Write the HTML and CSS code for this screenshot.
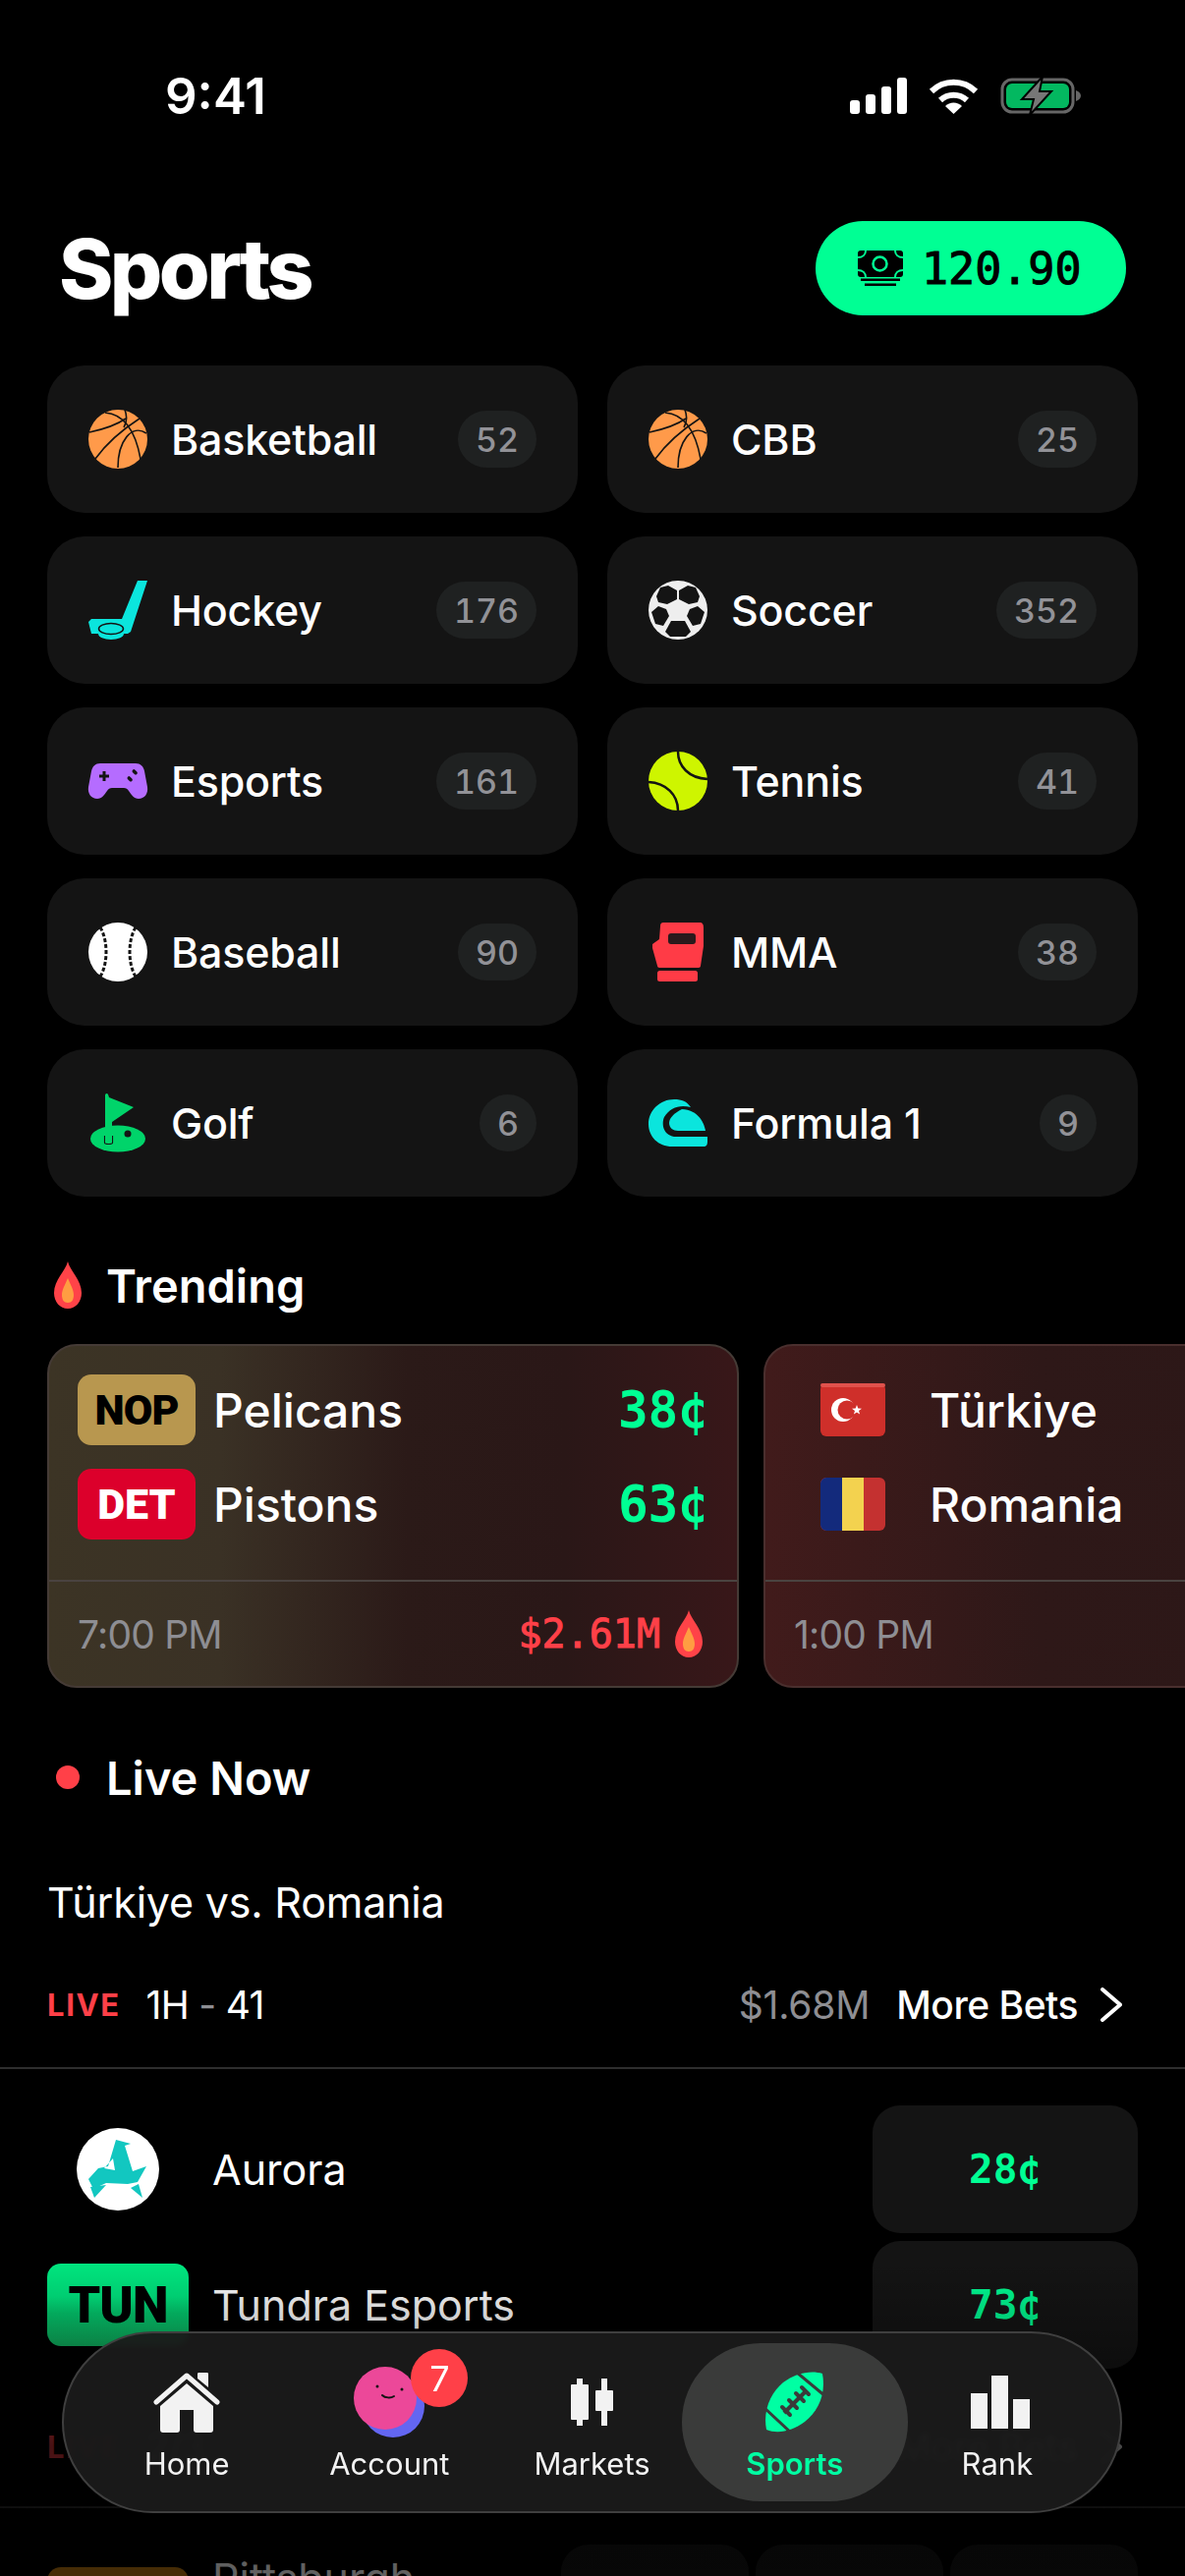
FILE: index.html
```html
<!DOCTYPE html>
<html lang="en">
<head>
  <meta charset="UTF-8">
  <meta name="viewport" content="width=device-width, initial-scale=1.0">
  <title>Sports</title>
  <link rel="stylesheet" href="styles.css">
</head>
<body>

  <!-- Shared icons -->
  <svg class="icon-defs" xmlns="http://www.w3.org/2000/svg">
    <symbol id="basketball" viewBox="0 0 60 60">
      <circle cx="30" cy="30" r="30" fill="#ff9a4a"/>
      <g fill="none" stroke="#141414" stroke-width="1.6">
        <path d="M1 23C15 20 28 16 38 9"/>
        <path d="M7 50C20 32 35 20 52 9"/>
        <path d="M17 3C30 4 46 12 53 50"/>
        <path d="M59 24C44 14 30 32 30 59"/>
        <path d="M37 0C40 8 39 13 36 18"/>
      </g>
    </symbol>
    <symbol id="flame" viewBox="0 0 28 48">
      <path d="M14 0C16 9 28 19 28 32C28 41 22 48 14 48C6 48 0 41 0 32C0 19 12 9 14 0Z" fill="#ff4348"/>
      <path d="M14 17C17 24 20 29 20 34C20 39 18 42 14 42C10 42 8 39 8 34C8 29 11 24 14 17Z" fill="#ff9d42"/>
    </symbol>
    <symbol id="chevron" viewBox="0 0 23 35">
      <path d="M3 2L21 17.500L3 33" fill="none" stroke="#fff" stroke-width="4" stroke-linecap="round" stroke-linejoin="round"/>
    </symbol>
  </svg>

  <div class="phone">

    <!-- Status bar -->
    <div class="status-bar">
      <span class="time">9:41</span>
      <div class="status-icons">
        <svg width="58" height="37" viewBox="0 0 58 37" fill="#fff">
          <rect x="0" y="23" width="10" height="14" rx="3"/>
          <rect x="16" y="17" width="10" height="20" rx="3"/>
          <rect x="32" y="9" width="10" height="28" rx="3"/>
          <rect x="48" y="0" width="10" height="37" rx="3"/>
        </svg>
        <svg width="51" height="37" viewBox="0 0 51 37">
          <g fill="none" stroke="#fff" stroke-width="6">
            <path d="M3 14A32 32 0 0 1 48 14"/>
            <path d="M12 23A20 20 0 0 1 39 23"/>
          </g>
          <path d="M25.500 37L17 29A12 12 0 0 1 34 29Z" fill="#fff"/>
        </svg>
        <svg width="82" height="39" viewBox="0 0 82 39">
          <rect x="2" y="3" width="72" height="33" rx="10" fill="none" stroke="#666" stroke-width="3"/>
          <rect x="6" y="7" width="64" height="25" rx="6" fill="#03b860"/>
          <path d="M77 14C80 15 82 17 82 19.500C82 22 80 24 77 25Z" fill="#666"/>
          <path d="M43 0L22 23H34L30 39L52 15H40Z" fill="#777" stroke="#000" stroke-width="2"/>
        </svg>
      </div>
    </div>

    <!-- Title and balance -->
    <div class="page-header">
      <h1 class="page-title">Sports</h1>
      <div class="balance">
        <svg width="46" height="36" viewBox="0 0 46 36">
          <rect x="0" y="0" width="46" height="27" rx="3" fill="#000"/>
          <circle cx="22.500" cy="13.500" r="7" fill="none" stroke="#00ff94" stroke-width="2.500"/>
          <g fill="none" stroke="#00ff94" stroke-width="2">
            <path d="M8 0C8 4 5 7 0 7"/>
            <path d="M38 0C38 4 41 7 46 7"/>
            <path d="M8 27C8 23 5 20 0 20"/>
            <path d="M38 27C38 23 41 20 46 20"/>
          </g>
          <rect x="3" y="28.500" width="40" height="2.500" fill="#000"/>
          <rect x="7" y="33.500" width="32" height="2.500" fill="#000"/>
        </svg>
        <span>120.90</span>
      </div>
    </div>

    <!-- Sport categories -->
    <div class="sports-grid">
      <div class="sport-card">
        <svg class="sport-icon" viewBox="0 0 60 60"><use href="#basketball"/></svg>
        <span class="sport-name">Basketball</span>
        <span class="count">52</span>
      </div>
      <div class="sport-card">
        <svg class="sport-icon" viewBox="0 0 60 60"><use href="#basketball"/></svg>
        <span class="sport-name">CBB</span>
        <span class="count">25</span>
      </div>
      <div class="sport-card">
        <svg class="sport-icon" viewBox="0 0 60 60">
          <path d="M50 0H60L43 52L40 54H3L0 42L3 39H34Z" fill="#0be5dd"/>
          <ellipse cx="23" cy="54" rx="13" ry="6" fill="#0be5dd"/>
          <ellipse cx="23" cy="49" rx="12.500" ry="5.500" fill="#0be5dd" stroke="#141414" stroke-width="1.500"/>
        </svg>
        <span class="sport-name">Hockey</span>
        <span class="count">176</span>
      </div>
      <div class="sport-card">
        <svg class="sport-icon" viewBox="0 0 60 60">
          <circle cx="30" cy="30" r="30" fill="#eee"/>
          <g fill="#141414">
            <path d="M8 16L12 7L20 5L29 10V19L19 24L10 22Z"/>
            <path d="M52 16L48 7L40 5L31 10V19L41 24L50 22Z"/>
            <path d="M3 32L10 26L18 29L21 36L15 46L7 44Z"/>
            <path d="M57 32L50 26L42 29L39 36L45 46L53 44Z"/>
            <path d="M17 52L23 41H37L43 52L38 57H22Z"/>
          </g>
        </svg>
        <span class="sport-name">Soccer</span>
        <span class="count">352</span>
      </div>
      <div class="sport-card">
        <svg class="sport-icon" viewBox="0 0 60 60">
          <g transform="translate(0 12)">
            <path d="M12 0H48C53 0 56 3 57 8L60 24C61 31 57 36 51 36C46 36 44 32 41 28C40 26 38 25 36 25H24C22 25 20 26 19 28C16 32 14 36 9 36C3 36 -1 31 0 24L3 8C4 3 7 0 12 0Z" fill="#b56cff"/>
            <path d="M14.500 8H17.500V11.500H21V14.500H17.500V18H14.500V14.500H11V11.500H14.500Z" fill="#141414"/>
            <rect x="44" y="7" width="6" height="3.500" rx="1.700" transform="rotate(45 47 9)" fill="#141414"/>
            <rect x="39" y="14" width="6" height="3.500" rx="1.700" transform="rotate(45 42 16)" fill="#141414"/>
          </g>
        </svg>
        <span class="sport-name">Esports</span>
        <span class="count">161</span>
      </div>
      <div class="sport-card">
        <svg class="sport-icon" viewBox="0 0 60 60">
          <circle cx="30" cy="30" r="30" fill="#cef500"/>
          <g fill="none" stroke="#141414" stroke-width="2.500">
            <path d="M30 0C30 15 41 27 60 28"/>
            <path d="M0 31C18 32 30 44 30 60"/>
          </g>
        </svg>
        <span class="sport-name">Tennis</span>
        <span class="count">41</span>
      </div>
      <div class="sport-card">
        <svg class="sport-icon" viewBox="0 0 60 60">
          <circle cx="30" cy="30" r="30" fill="#fff"/>
          <g fill="none" stroke="#141414" stroke-width="3" stroke-dasharray="4 2">
            <path d="M12 5C20 18 20 42 12 55"/>
            <path d="M48 5C40 18 40 42 48 55"/>
          </g>
        </svg>
        <span class="sport-name">Baseball</span>
        <span class="count">90</span>
      </div>
      <div class="sport-card">
        <svg class="sport-icon" viewBox="0 0 60 60">
          <path d="M15 0H52C55 0 56 2 56 5V24L53 44C53 45 52 46 51 46H11C10 46 9 45 9 44L4 26V22L11 17L12 4C12 1 13 0 15 0Z" fill="#ff3b46"/>
          <rect x="20" y="11" width="28" height="11" rx="3" fill="#2a1a1c"/>
          <rect x="9" y="49" width="41" height="11" rx="2.500" fill="#ff3b46"/>
        </svg>
        <span class="sport-name">MMA</span>
        <span class="count">38</span>
      </div>
      <div class="sport-card">
        <svg class="sport-icon" viewBox="0 0 60 60">
          <ellipse cx="30" cy="46" rx="28" ry="13.500" fill="#00d46a"/>
          <circle cx="40" cy="41" r="3.500" fill="#141414"/>
          <path d="M16.500 43V50C16.500 52 24.500 52 24.500 50V43" fill="none" stroke="#141414" stroke-width="1.200"/>
          <path d="M17 2C17 0 19 -1 20 1L21 4L46 14L24 29V50H17Z" fill="#00d46a"/>
        </svg>
        <span class="sport-name">Golf</span>
        <span class="count">6</span>
      </div>
      <div class="sport-card">
        <svg class="sport-icon" viewBox="0 0 60 60">
          <path d="M26 6C34 6 39 8 43 14C32 11 22 14 16 24C13 31 15 42 26 44H60V49C60 52 59 54 56 54H24C10 54 0 44 0 31C0 17 12 6 26 6Z" fill="#0be5dd"/>
          <path d="M34 16C26 20 21 25 21 30C21 35 25 38 30 38H58C56 28 50 17 34 16Z" fill="#0be5dd"/>
        </svg>
        <span class="sport-name">Formula 1</span>
        <span class="count">9</span>
      </div>
    </div>

    <!-- Trending -->
    <div class="section-title trending-title">
      <svg class="flame-icon" width="28" height="48"><use href="#flame"/></svg>
      <span>Trending</span>
    </div>

    <div class="trending-list">
      <div class="trending-card">
        <div class="trending-teams">
          <div class="trending-team">
            <span class="team-badge badge-nop">NOP</span>
            <span class="team-name">Pelicans</span>
            <span class="team-price">38¢</span>
          </div>
          <div class="trending-team">
            <span class="team-badge badge-det">DET</span>
            <span class="team-name">Pistons</span>
            <span class="team-price">63¢</span>
          </div>
        </div>
        <div class="trending-footer">
          <span class="trending-time">7:00 PM</span>
          <span class="trending-volume">$2.61M</span>
          <svg class="flame-icon" width="28" height="48"><use href="#flame"/></svg>
        </div>
      </div>

      <div class="trending-card trending-card-alt">
        <div class="trending-teams">
          <div class="trending-team">
            <span class="flag-box">
              <svg width="66" height="54" viewBox="0 0 66 54">
                <rect width="66" height="54" rx="6" fill="#cf2f2a"/>
                <rect width="66" height="4" rx="2" fill="#e0524c"/>
                <circle cx="23" cy="27" r="12" fill="#fff"/>
                <circle cx="27" cy="27" r="9.500" fill="#cf2f2a"/>
                <path d="M37 22L38.300 25.600L42 25.700L39 28L40.100 31.600L37 29.500L33.900 31.600L35 28L32 25.700L35.700 25.600Z" fill="#fff"/>
              </svg>
            </span>
            <span class="team-name">Türkiye</span>
          </div>
          <div class="trending-team">
            <span class="flag-box">
              <svg width="66" height="54" viewBox="0 0 66 54">
                <rect width="66" height="54" rx="6" fill="#c43130"/>
                <path d="M6 0H22V54H6C3 54 0 51 0 48V6C0 3 3 0 6 0Z" fill="#132a7c"/>
                <rect x="22" width="22" height="54" fill="#f3d24f"/>
              </svg>
            </span>
            <span class="team-name">Romania</span>
          </div>
        </div>
        <div class="trending-footer">
          <span class="trending-time">1:00 PM</span>
        </div>
      </div>
    </div>

    <!-- Live now -->
    <div class="section-title live-title">
      <span class="live-dot"></span>
      <span>Live Now</span>
    </div>

    <div class="match-title">Türkiye vs. Romania</div>
    <div class="match-meta">
      <span class="live-tag">LIVE</span>
      <span class="match-clock">1H <span class="dash">-</span> 41</span>
      <span class="match-volume">$1.68M</span>
      <span class="more-bets">More Bets</span>
      <svg class="chevron" width="23" height="35"><use href="#chevron"/></svg>
    </div>

    <div class="odds-list">
      <div class="odds-row">
        <span class="odds-logo">
          <svg width="84" height="84" viewBox="0 0 84 84">
            <circle cx="42" cy="42" r="42" fill="#fff"/>
            <path d="M40 12L55 16L49 18L57 44L71 39L62 55L52 57L30 56L17 62L12 52L22 41L32 39ZM37 31L28 41L39 43Z" fill="#12c7c0" fill-rule="evenodd"/>
            <path d="M14 60L30 58L18 71Z" fill="#12c7c0"/>
            <path d="M55 61L63 57L67 71Z" fill="#12c7c0"/>
          </svg>
        </span>
        <span class="odds-name">Aurora</span>
        <div class="odds-box odds-price">28¢</div>
      </div>
      <div class="odds-row">
        <span class="odds-logo">
          <span class="team-badge badge-tun">TUN</span>
        </span>
        <span class="odds-name">Tundra Esports</span>
        <div class="odds-box odds-price">73¢</div>
      </div>
    </div>

    <div class="match-meta match-meta-next">
      <span class="live-tag">LIVE</span>
      <span class="match-clock">2/3</span>
      <span class="match-volume">$1.09M</span>
      <span class="more-bets">More Bets</span>
      <svg class="chevron" width="23" height="35"><use href="#chevron"/></svg>
    </div>

    <div class="odds-list">
      <div class="odds-row odds-row-spread">
        <span class="odds-logo">
          <span class="team-badge badge-pit"></span>
        </span>
        <span class="odds-name">Pittsburgh</span>
        <div class="spread-boxes">
          <div class="odds-box spread-box">-1.5</div>
          <div class="odds-box spread-box">227.5</div>
          <div class="odds-box spread-box"></div>
        </div>
      </div>
    </div>

    <!-- Fade under the tab bar -->
    <div class="bottom-fade"></div>

    <!-- Tab bar -->
    <nav class="tab-bar">
      <div class="tab-item">
        <span class="tab-icon">
          <svg width="68" height="64" viewBox="0 0 68 64" fill="#f2f2f2">
            <path d="M45 3C45 2 46 2 47 2H55C56 2 56 3 56 4V17L45 8Z"/>
            <path d="M3 32L34 5L65 32" fill="none" stroke="#f2f2f2" stroke-width="5" stroke-linecap="round" stroke-linejoin="round"/>
            <path d="M34 13L61 36V60C61 62 60 63 58 63H44C42 63 41 62 41 60V40H27V60C27 62 26 63 24 63H10C8 63 7 62 7 60V36Z"/>
          </svg>
        </span>
        <span class="tab-label">Home</span>
      </div>
      <div class="tab-item">
        <span class="tab-icon">
          <span class="avatar">
            <svg width="72" height="72" viewBox="0 0 72 72">
              <circle cx="40" cy="40" r="32" fill="#6366f1"/>
              <circle cx="32" cy="32" r="32" fill="#ec4899"/>
              <circle cx="24" cy="20" r="1.500" fill="#141414"/>
              <circle cx="49" cy="23" r="1.500" fill="#141414"/>
              <path d="M29 29C32 32 38 32 41 30" fill="none" stroke="#141414" stroke-width="2" stroke-linecap="round"/>
            </svg>
            <span class="avatar-badge">7</span>
          </span>
        </span>
        <span class="tab-label">Account</span>
      </div>
      <div class="tab-item">
        <span class="tab-icon">
          <svg width="43" height="48" viewBox="0 0 43 48" fill="#f2f2f2">
            <rect x="6" y="0" width="6" height="48"/>
            <rect x="0" y="6" width="18" height="36" rx="1"/>
            <rect x="31" y="0" width="6" height="48"/>
            <rect x="25" y="12" width="18" height="21" rx="1"/>
          </svg>
        </span>
        <span class="tab-label">Markets</span>
      </div>
      <div class="tab-item tab-item-active">
        <span class="tab-icon">
          <svg width="63" height="64" viewBox="0 0 63 64">
            <path d="M60 3C64 25 55 42 42 52C30 61 15 65 3 60C-1 40 8 22 20 12C32 3 48 -1 60 3Z" fill="#00ffa3"/>
            <g fill="none" stroke="#3a3b3a">
              <path d="M33 1L63 26M0 37L29 64" stroke-width="3"/>
              <path d="M21 43L44 20" stroke-width="4"/>
              <path d="M19 37L27 45M26 30L34 38M33 23L41 31M39 17L46 24" stroke-width="4" stroke-linecap="round"/>
            </g>
          </svg>
        </span>
        <span class="tab-label">Sports</span>
      </div>
      <div class="tab-item">
        <span class="tab-icon">
          <svg width="66" height="54" viewBox="-6 0 66 54" fill="#f2f2f2">
            <rect x="0" y="18" width="17" height="36"/>
            <rect x="21" y="0" width="17" height="54"/>
            <rect x="43" y="24" width="17" height="30"/>
          </svg>
        </span>
        <span class="tab-label">Rank</span>
      </div>
    </nav>

  </div>

</body>
</html>
```

FILE: styles.css
```css
/* General full-screen styling */
* {
  margin: 0;
  padding: 0;
  box-sizing: border-box;
  font-family: Inter, "Noto Sans", sans-serif;
}
body {
  background-color: #000;
  color: #fff;
}
svg {
  display: block;
  flex-shrink: 0;
}

.icon-defs {
  width: 0;
  height: 0;
  position: absolute;
}

.phone {
  width: 1206px;
  height: 2622px;
  position: relative;
  overflow: hidden;
  background-color: #000;
}

/* Status bar */
.status-bar {
  height: 194px;
  padding: 0 106px 0 168px;
  display: flex;
  align-items: center;
  justify-content: space-between;
}

.time {
  font-size: 51px;
  font-weight: 600;
}

.status-icons {
  display: flex;
  align-items: center;
  gap: 22px;
}

/* Title and balance */
.page-header {
  height: 158px;
  margin-bottom: 20px;
  padding: 0 60px;
  display: flex;
  align-items: center;
  justify-content: space-between;
}

.page-title {
  font-size: 84px;
  font-weight: 800;
  letter-spacing: -3.6px;
}

.balance {
  width: 316px;
  height: 96px;
  padding-left: 43px;
  border-radius: 48px;
  background-color: #00ff94;
  color: #000;
  display: flex;
  align-items: center;
  gap: 19px;
}

.balance span {
  font-family: "DejaVu Sans Mono", monospace;
  font-size: 45px;
  -webkit-text-stroke: 1px #000;
}

/* Sport categories */
.sports-grid {
  margin: 0 48px;
  display: grid;
  grid-template-columns: 540px 540px;
  grid-auto-rows: 150px;
  gap: 24px 30px;
}

.sport-card {
  padding: 0 42px;
  border-radius: 38px;
  background-color: #141414;
  display: flex;
  align-items: center;
  gap: 24px;
}

.sport-icon {
  width: 60px;
  height: 60px;
  overflow: visible;
}

.sport-name {
  flex: 1;
  font-size: 43px;
  font-weight: 500;
  letter-spacing: -0.2px;
}

.count {
  min-width: 58px;
  height: 58px;
  padding: 0 18px;
  border-radius: 29px;
  background-color: #1f2121;
  color: #929297;
  font-size: 34px;
  font-weight: 500;
  font-variant-numeric: tabular-nums;
  display: flex;
  align-items: center;
  justify-content: center;
}

/* Section headings */
.section-title {
  height: 56px;
  font-size: 47px;
  font-weight: 600;
  display: flex;
  align-items: center;
}

.trending-title {
  margin-top: 62px;
  padding-left: 55px;
  gap: 25px;
}

.live-title {
  margin-top: 63px;
  padding-left: 57px;
  gap: 27px;
}

.live-dot {
  width: 24px;
  height: 24px;
  border-radius: 50%;
  background-color: #ff4048;
}

/* Trending cards */
.trending-list {
  margin-top: 32px;
  padding-left: 48px;
  display: flex;
  gap: 25px;
  overflow: hidden;
}

.trending-card {
  width: 704px;
  height: 350px;
  flex-shrink: 0;
  border: 2px solid #453b36;
  border-radius: 30px;
  background: linear-gradient(90deg, #3c3425 0%, #3a3125 25%, #2b1a18 52%, #2a1717 75%, #381719 100%);
  display: flex;
  flex-direction: column;
}

.trending-card-alt {
  border-color: #4a2f2e;
  background: linear-gradient(90deg, #411b1b 0%, #2e1818 40%, #2b1717 100%);
}

.trending-teams {
  height: 240px;
  padding: 29px 29px 0;
  border-bottom: 2px solid #4a4340;
  display: flex;
  flex-direction: column;
  gap: 24px;
}

.trending-team {
  height: 72px;
  display: flex;
  align-items: center;
  gap: 18px;
}

.team-name {
  flex: 1;
  font-size: 48px;
  font-weight: 500;
}

.team-price {
  font-family: "DejaVu Sans Mono", monospace;
  font-size: 51px;
  font-weight: 700;
  color: #00ff94;
}

.team-badge {
  width: 120px;
  height: 72px;
  border-radius: 14px;
  font-family: Roboto, sans-serif;
  font-size: 43px;
  font-weight: 900;
  letter-spacing: -1px;
  display: flex;
  align-items: center;
  justify-content: center;
}

.badge-nop {
  background-color: #b8974f;
  color: #000;
}

.badge-det {
  background-color: #dc002b;
  color: #fff;
  letter-spacing: 0;
}

.badge-tun {
  width: 144px;
  height: 84px;
  background: linear-gradient(180deg, #00e880 0%, #00e880 40%, #03cc6f 60%, #0fb25f 100%);
  color: #000;
  font-size: 52px;
}

.badge-pit {
  width: 144px;
  height: 84px;
  background-color: #b8740f;
}

.flag-box {
  width: 120px;
  display: flex;
  justify-content: center;
}

.trending-footer {
  flex: 1;
  padding: 0 35px 0 29px;
  display: flex;
  align-items: center;
  gap: 15px;
}

.trending-time {
  flex: 1;
  font-size: 39px;
  letter-spacing: -0.8px;
  color: #8e8e93;
}

.trending-volume {
  font-family: "DejaVu Sans Mono", monospace;
  font-size: 40px;
  color: #ff4048;
  -webkit-text-stroke: 1px #ff4048;
}

/* Live match */
.match-title {
  margin-top: 69px;
  padding-left: 48px;
  font-size: 43px;
  line-height: 60px;
  letter-spacing: -0.2px;
}

.match-meta {
  height: 50px;
  margin-top: 49px;
  padding: 0 64px 39px 48px;
  box-sizing: content-box;
  border-bottom: 2px solid #2e2e2e;
  display: flex;
  align-items: center;
}

.match-meta-next {
  margin-top: 54px;
  padding-bottom: 36px;
}

.live-tag {
  font-size: 31px;
  font-weight: 700;
  letter-spacing: 1.6px;
  color: #ff4048;
}

.match-clock {
  flex: 1;
  margin-left: 26px;
  font-size: 39px;
  letter-spacing: -0.7px;
}

.match-clock .dash {
  color: #8e8e93;
}

.match-volume {
  font-size: 39px;
  letter-spacing: -0.2px;
  color: #8e8e93;
}

.more-bets {
  margin: 0 22px 0 27px;
  font-size: 39px;
  font-weight: 500;
  letter-spacing: -0.5px;
}

/* Odds rows */
.odds-list {
  padding: 37px 48px 0;
  display: flex;
  flex-direction: column;
  gap: 8px;
}

.odds-row {
  height: 130px;
  display: flex;
  align-items: center;
  gap: 24px;
}

.odds-logo {
  width: 144px;
  display: flex;
  justify-content: center;
}

.odds-name {
  flex: 1;
  font-size: 43px;
}

.odds-box {
  width: 270px;
  height: 130px;
  border-radius: 28px;
  background-color: #141414;
  display: flex;
  align-items: center;
  justify-content: center;
}

.odds-price {
  font-family: "DejaVu Sans Mono", monospace;
  font-size: 41px;
  font-weight: 700;
  color: #00ff94;
}

.odds-row-spread .odds-name {
  align-self: flex-start;
  margin-top: 8px;
}

.spread-boxes {
  display: flex;
  gap: 7px;
}

.spread-box {
  width: 191px;
  padding-top: 24px;
  align-items: flex-start;
  font-size: 38px;
}

/* Fade under the tab bar */
.bottom-fade {
  position: absolute;
  left: 0;
  right: 0;
  bottom: 0;
  height: 322px;
  background: linear-gradient(180deg, rgba(0, 0, 0, 0) 0%, rgba(0, 0, 0, 0.28) 28%, rgba(0, 0, 0, 0.72) 59%, rgba(0, 0, 0, 0.62) 100%);
}

/* Tab bar */
.tab-bar {
  position: absolute;
  left: 63px;
  top: 2373px;
  width: 1079px;
  height: 185px;
  padding: 10px 22px;
  border: 2px solid #3f3f3f;
  border-radius: 93px;
  background-color: rgba(26, 26, 26, 0.95);
  backdrop-filter: blur(3px);
  display: flex;
}

.tab-item {
  width: 207px;
  padding-top: 28px;
  display: flex;
  flex-direction: column;
  align-items: center;
}

.tab-item-active {
  width: 231px;
  margin: 0 -12px;
  border-radius: 80px;
  background-color: #3a3b3a;
}

.tab-icon {
  height: 64px;
  display: flex;
  align-items: center;
  justify-content: center;
}

.tab-label {
  margin-top: 13px;
  font-size: 31px;
  line-height: 36px;
  color: #f2f2f2;
}

.tab-item-active .tab-label {
  color: #00ffa3;
  font-weight: 600;
}

.avatar {
  position: relative;
  width: 72px;
  height: 72px;
}

.avatar-badge {
  position: absolute;
  top: -18px;
  right: -44px;
  width: 58px;
  height: 59px;
  border-radius: 50%;
  background-color: #ff4048;
  color: #fff;
  font-size: 36px;
  display: flex;
  align-items: center;
  justify-content: center;
}
```
